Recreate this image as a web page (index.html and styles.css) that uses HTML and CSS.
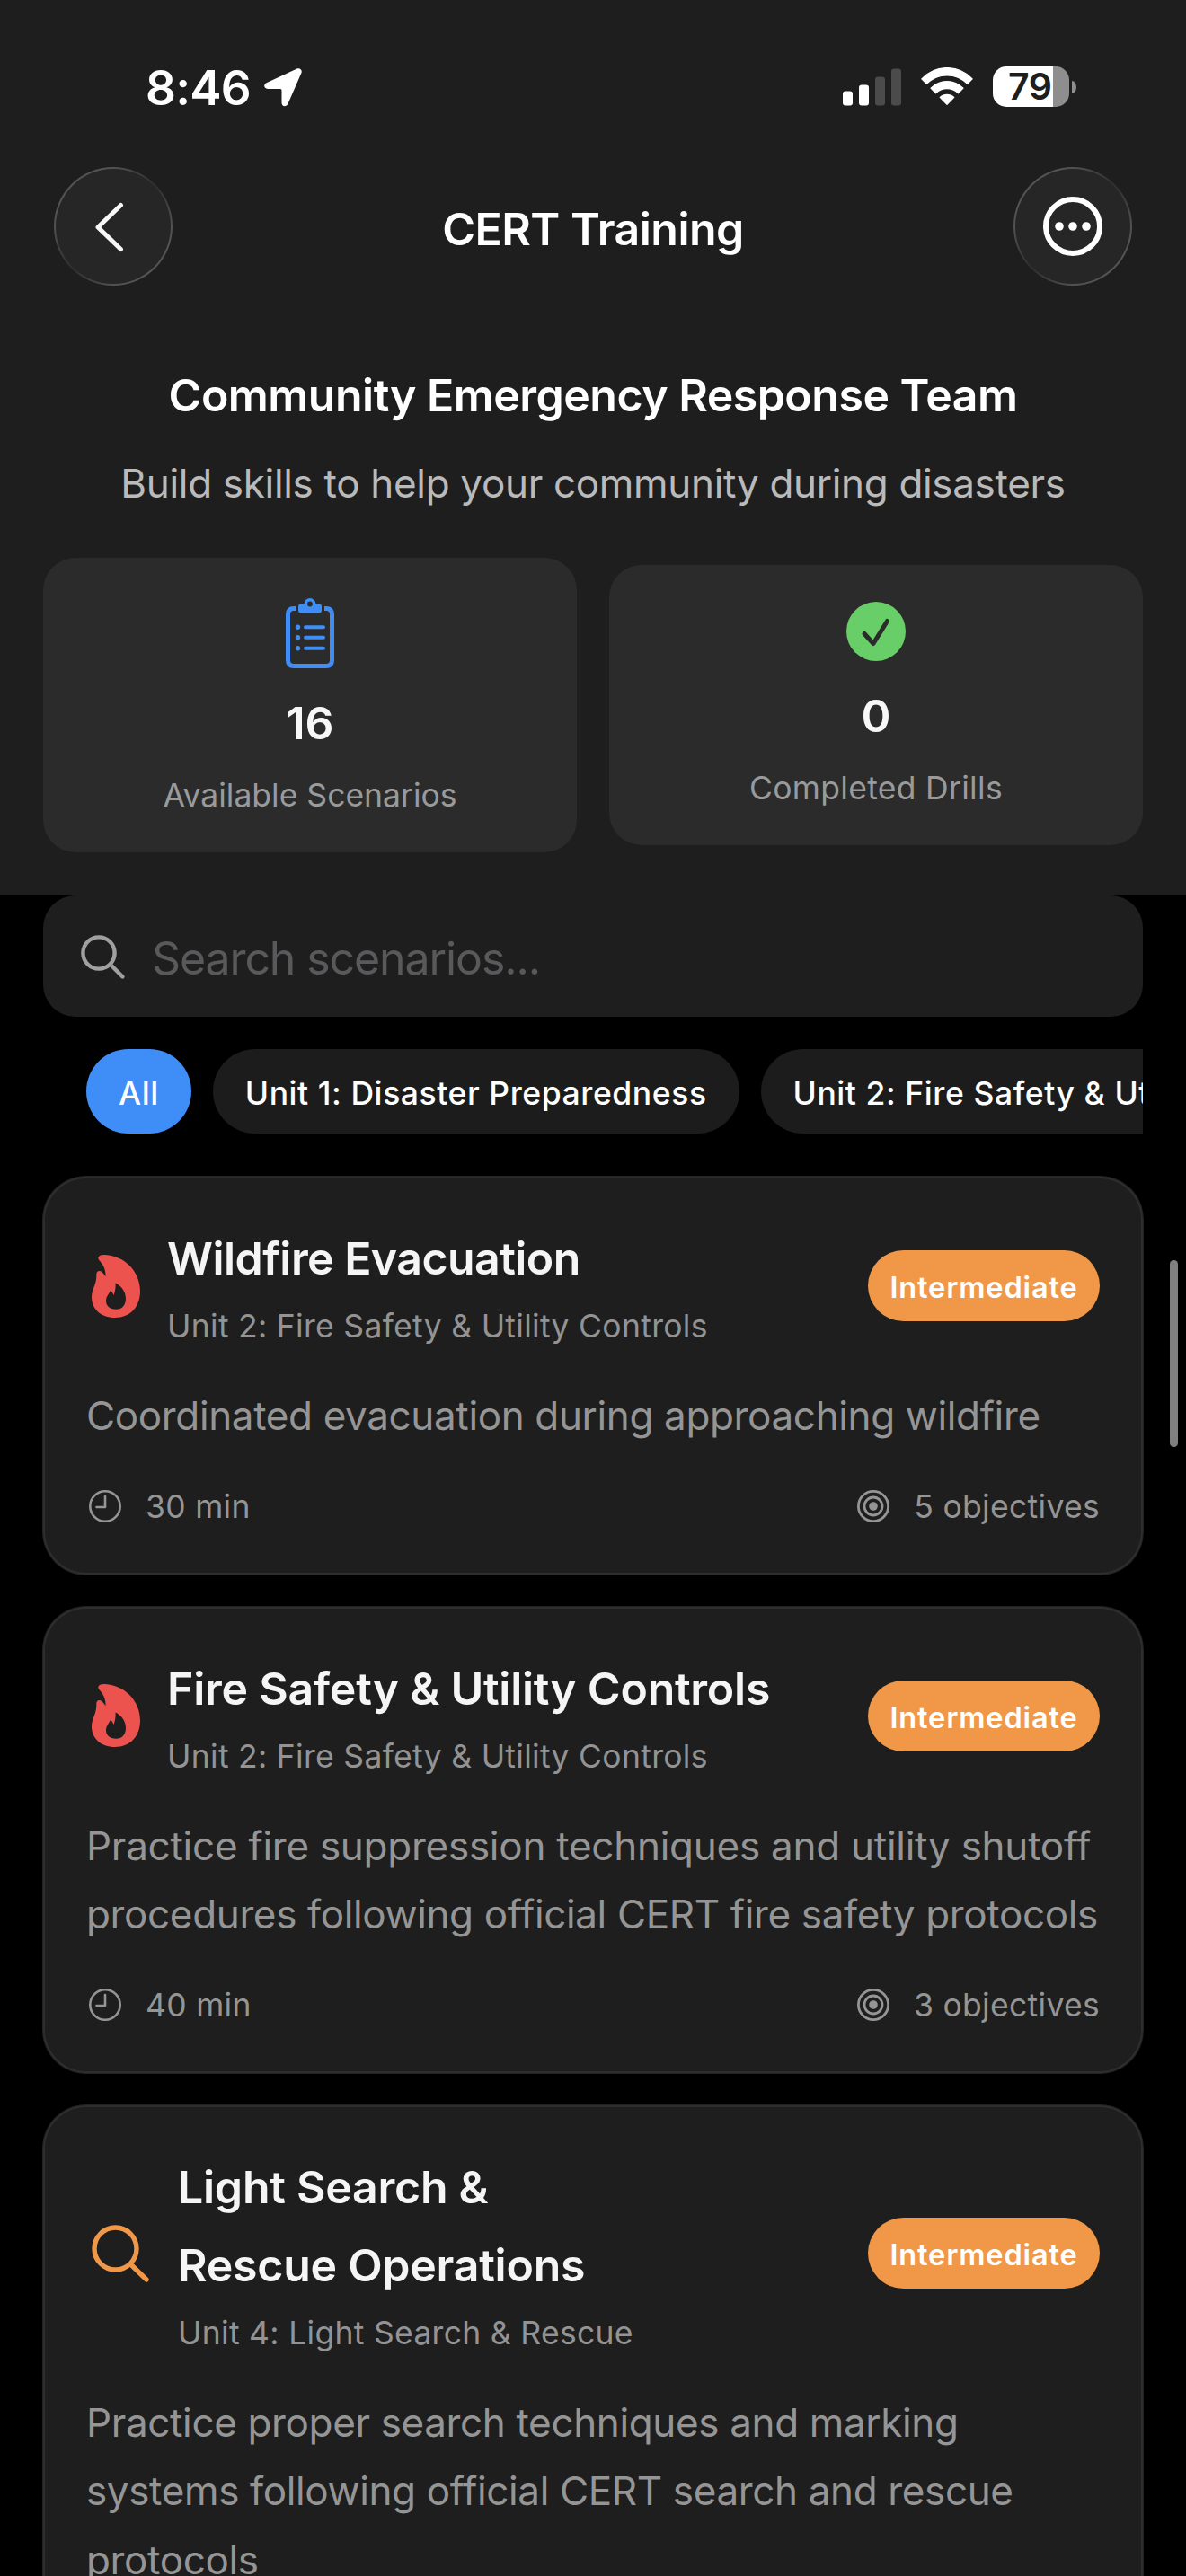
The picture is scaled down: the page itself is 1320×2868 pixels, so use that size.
FILE: index.html
```html
<!DOCTYPE html>
<html lang="en">
<head>
<meta charset="utf-8">
<title>CERT Training</title>
<link rel="stylesheet" href="styles.css">
</head>
<body>
<svg class="defs" width="0" height="0" aria-hidden="true">
  <defs>
    <symbol id="flame" viewBox="0 0 54 70"><path fill-rule="evenodd" d="M13.500 0C36 .5 54 18 54 40.500C54 58 43 70 26 70C10 70 0 60 0 47.500C0 38 5.800 33 5.300 22C5.300 17.500 9 17 11.500 19.300C13.300 21 14.500 22.500 15.500 24.500C16 17 13 11 8.300 6C6 3 8 0 13.500 0ZM26.500 31.500C27 36 26 41 24.700 45C23.600 43 22.500 41 21 39.500C20 43 16 46 16 51.500C16 57 20.500 60.800 27 60.800C34 60.800 38 56 38 49C38 41 33 34.500 26.500 31.500Z"/></symbol>
    <symbol id="clock" viewBox="0 0 42 42"><g fill="none" stroke="currentColor" stroke-width="2.600" stroke-linecap="round" stroke-linejoin="round"><circle cx="21" cy="21" r="16.700"/><path d="M21 10V22H11.500"/></g></symbol>
    <symbol id="target" viewBox="0 0 42 42"><g fill="none" stroke="currentColor" stroke-width="2.800"><circle cx="21" cy="21" r="16.600"/><circle cx="21" cy="21" r="10"/></g><circle cx="21" cy="21" r="4.800" fill="currentColor"/></symbol>
  </defs>
</svg>

<header class="header">
  <div class="status">
    <div class="status-left">
      <span class="time">8:46</span>
      <svg class="location" width="42" height="43" viewBox="0 0 42 43"><path fill="#fff" d="M36.500.5C39.500-.8 42.600 1.600 41.500 5L26.500 39.500C24.800 43.500 19.500 43 19.500 38.500V24.500Q19.500 23 18 23H4C-.3 23-1.200 18 2.500 16.200Z"/></svg>
    </div>
    <div class="status-right">
      <svg width="65" height="42" viewBox="0 0 65 42"><rect x="0" y="25.500" width="11" height="16" rx="3" fill="#fff"/><rect x="18" y="18.500" width="11" height="23" rx="3" fill="#fff"/><rect x="36" y="9.500" width="11" height="32" rx="3" fill="#4b4b4b"/><rect x="54" y=".5" width="11" height="41" rx="3" fill="#4b4b4b"/></svg>
      <svg class="wifi" width="58" height="43" viewBox="0 0 58 43"><g fill="#fff" stroke="#fff" stroke-width="1.200" stroke-linejoin="round"><path d="M.8 12.800C16.500-3.500 41.500-3.500 57.200 12.800L51.700 18.400C39 5.700 19 5.700 6.300 18.400Z"/><path d="M11 23.200C21 13 37 13 47 23.200L41.500 28.800C34.700 22 23.300 22 16.500 28.800Z"/><path d="M21.200 33.400C25.600 29.400 32.400 29.400 36.800 33.400L29 41.400Z"/></g></svg>
      <div class="battery"><div class="battery-body"><span class="battery-text">79</span></div><div class="battery-cap"></div></div>
    </div>
  </div>
  <nav class="nav">
    <div class="round"><svg width="132" height="132" viewBox="0 0 132 132"><path d="M74.500 42.500L49 67L74.500 91.500" fill="none" stroke="#f7f7f7" stroke-width="5" stroke-linecap="round" stroke-linejoin="round"/></svg></div>
    <div class="nav-title">CERT Training</div>
    <div class="round"><svg width="132" height="132" viewBox="0 0 132 132"><circle cx="66" cy="66" r="30" fill="none" stroke="#fff" stroke-width="6"/><g fill="#fff"><circle cx="51" cy="66" r="4.800"/><circle cx="66" cy="66" r="4.800"/><circle cx="81" cy="66" r="4.800"/></g></svg></div>
  </nav>
  <h1 class="heading">Community Emergency Response Team</h1>
  <p class="lead">Build skills to help your community during disasters</p>
  <div class="stats">
    <div class="stat">
      <svg width="54" height="82" viewBox="0 0 54 82"><path d="M11 15.500H9Q2.500 15.500 2.500 22V73Q2.500 79.500 9 79.500H45Q51.500 79.500 51.500 73V22Q51.500 15.500 45 15.500H43" fill="none" stroke="#3f8ef7" stroke-width="5"/><g fill="#3f8ef7"><rect x="14" y="10.500" width="26" height="10" rx="3"/><circle cx="27" cy="10.500" r="6.500"/><circle cx="27" cy="10.500" r="2.900" fill="#2b2b2b"/><circle cx="13.500" cy="36.300" r="2.700"/><circle cx="13.500" cy="47.700" r="2.700"/><circle cx="13.500" cy="59.700" r="2.700"/><rect x="20" y="34.300" width="24" height="4" rx="2"/><rect x="20" y="45.700" width="24" height="4" rx="2"/><rect x="20" y="57.700" width="24" height="4" rx="2"/></g></svg>
      <div class="stat-value">16</div>
      <div class="stat-label">Available Scenarios</div>
    </div>
    <div class="stat">
      <svg width="66" height="66" viewBox="0 0 66 66"><circle cx="33" cy="33" r="33" fill="#68ce67"/><path d="M20 35.500L30 46.500L45.500 21.500" fill="none" stroke="#2b2b2b" stroke-width="5" stroke-linecap="round" stroke-linejoin="round"/></svg>
      <div class="stat-value">0</div>
      <div class="stat-label wide">Completed Drills</div>
    </div>
  </div>
</header>

<main class="main">
  <div class="search">
    <svg width="50" height="50" viewBox="0 0 50 50"><g fill="none" stroke="#a0a0a0" stroke-width="4.400" stroke-linecap="round"><circle cx="20" cy="20" r="17.600"/><path d="M33 33L46.500 46.500"/></g></svg>
    <span class="search-text">Search scenarios...</span>
  </div>
  <div class="chips">
    <div class="chip active">All</div>
    <div class="chip">Unit 1: Disaster Preparedness</div>
    <div class="chip">Unit 2: Fire Safety &amp; Utility Controls</div>
  </div>

  <div class="cards">
    <article class="card">
      <div class="card-head">
        <svg class="flame" width="66" height="70"><use href="#flame"/></svg>
        <div class="names"><h2 class="title tight">Wildfire Evacuation</h2><div class="unit">Unit 2: Fire Safety &amp; Utility Controls</div></div>
        <span class="badge">Intermediate</span>
      </div>
      <p class="desc">Coordinated evacuation during approaching wildfire</p>
      <div class="meta">
        <div class="meta-item"><svg width="42" height="42"><use href="#clock"/></svg>30 min</div>
        <div class="meta-item"><svg width="42" height="42"><use href="#target"/></svg>5 objectives</div>
      </div>
    </article>

    <article class="card">
      <div class="card-head">
        <svg class="flame" width="66" height="70"><use href="#flame"/></svg>
        <div class="names"><h2 class="title">Fire Safety &amp; Utility Controls</h2><div class="unit">Unit 2: Fire Safety &amp; Utility Controls</div></div>
        <span class="badge">Intermediate</span>
      </div>
      <p class="desc"><span class="loose">Practice fire suppression techniques and utility shutoff</span><br>procedures following official CERT fire safety protocols</p>
      <div class="meta">
        <div class="meta-item"><svg width="42" height="42"><use href="#clock"/></svg>40 min</div>
        <div class="meta-item"><svg width="42" height="42"><use href="#target"/></svg>3 objectives</div>
      </div>
    </article>

    <article class="card">
      <div class="card-head">
        <svg width="78" height="66" viewBox="0 0 78 66"><g fill="none" stroke="#f09848" stroke-width="5.400" stroke-linecap="round"><circle cx="32.500" cy="27.500" r="23.500"/><path d="M49.500 45L67 62"/></g></svg>
        <div class="names"><h2 class="title">Light Search &amp;<br>Rescue Operations</h2><div class="unit">Unit 4: Light Search &amp; Rescue</div></div>
        <span class="badge">Intermediate</span>
      </div>
      <p class="desc">Practice proper search techniques and marking<br>systems following official CERT search and rescue<br>protocols</p>
    </article>
  </div>
</main>
<div class="scrollbar"></div>
</body>
</html>
```
FILE: styles.css
```css
* { box-sizing: border-box; margin: 0; padding: 0; }
html, body { height: 2868px; overflow: hidden; }
body {
  position: relative;
  width: 1320px;
  background: #000;
  color: #fff;
  font-family: Inter, "Liberation Sans", sans-serif;
}
svg { display: block; flex: none; }
.defs { position: absolute; }

.header { height: 997px; background: #1e1e1e; }
.status { height: 186px; padding: 74px 122px 0 162px; display: flex; justify-content: space-between; align-items: flex-start; }
.status-left { display: flex; align-items: center; gap: 15px; height: 47px; }
.time { font-size: 53px; font-weight: 600; line-height: 48px; letter-spacing: -0.8px; }
.status-right { display: flex; align-items: center; gap: 22px; height: 45px; }
.battery { display: flex; align-items: center; gap: 3px; }
.battery-body {
  width: 85px; height: 45px; border-radius: 15px;
  background: linear-gradient(90deg, #fff 67px, #8e8e8e 67px);
  padding-left: 17px;
}
.battery-text { display: block; font-size: 41px; line-height: 45px; font-weight: 600; color: #1e1e1e; letter-spacing: -0.5px; }
.battery-cap { width: 5px; height: 14px; border-radius: 0 5px 5px 0 / 0 7px 7px 0; background: #8e8e8e; }

.nav { height: 132px; padding: 0 60px; display: flex; justify-content: space-between; }
.round {
  width: 132px; height: 132px; border-radius: 50%; padding: 2px;
  background: linear-gradient(135deg, #585858 0%, #525252 25%, #303030 48%, #303030 52%, #525252 75%, #585858 100%);
  position: relative;
}
.round svg { margin: -2px; position: relative; }
.round::before { content: ""; position: absolute; inset: 2px; border-radius: 50%; background: #262626; }
.nav-title { font-size: 50px; font-weight: 600; line-height: 60px; padding-top: 39px; letter-spacing: -0.5px; }

.heading { margin-top: 92px; text-align: center; font-size: 50px; line-height: 60px; font-weight: 600; letter-spacing: -0.5px; }
.lead { margin-top: 38px; text-align: center; font-size: 44px; line-height: 60px; color: #bababa; letter-spacing: -0.32px; }
.stats { margin-top: 53px; padding: 0 48px; display: grid; grid-template-columns: 1fr 1fr; gap: 36px; align-items: center; }
.stat { border-radius: 36px; background: #2b2b2b; padding: 41px 0 39px; display: flex; flex-direction: column; align-items: center; }
.stat-value { margin-top: 31px; font-size: 50px; line-height: 60px; font-weight: 600; color: #f7f7f7; }
.stat-label { margin-top: 27px; font-size: 35.5px; line-height: 48px; color: #9a9a9a; }
.stat-label.wide { letter-spacing: 0.3px; }

.main { padding: 0 48px; }
.search { height: 135px; border-radius: 36px; background: #1e1e1e; padding: 2px 42px 0; display: flex; align-items: center; gap: 29px; }
.search-text { font-size: 50px; line-height: 60px; padding-top: 3px; color: #59595b; letter-spacing: -1.1px; }
.chips { margin-top: 36px; padding-left: 48px; display: flex; gap: 24px; overflow: hidden; }
.chip { flex: none; height: 94px; border-radius: 47px; padding: 3px 36px 0; background: #1c1c1c; font-size: 35.5px; line-height: 94px; font-weight: 500; letter-spacing: 0.57px; white-space: nowrap; }
.chip.active { background: #3f8ef7; }

.cards { margin-top: 48px; display: flex; flex-direction: column; gap: 36px; }
.card { padding: 48px 48px 47px; border-radius: 48px; background: #1e1e1e; box-shadow: 0 0 0 1px #222, inset 0 0 0 2px #2e2e2e; }
.card-head { display: flex; align-items: center; gap: 24px; }
.flame { fill: #ec534e; }
.names { flex: 1; }
.title { font-size: 50px; line-height: 87px; font-weight: 600; color: #f5f5f5; letter-spacing: -0.25px; }
.title.tight { letter-spacing: -0.55px; }
.unit { margin-top: 4px; font-size: 35.5px; line-height: 56px; color: #939393; letter-spacing: 0.3px; }
.badge { width: 258px; height: 79px; border-radius: 40px; padding-top: 2px; background: #f09848; text-align: center; font-size: 32.5px; line-height: 79px; font-weight: 600; letter-spacing: 0.85px; }
.desc { margin-top: 33px; font-size: 44px; line-height: 76.5px; color: #959595; white-space: nowrap; letter-spacing: -0.36px; }
.loose { letter-spacing: -0.26px; }
.meta { margin-top: 35px; display: flex; justify-content: space-between; }
.meta-item { display: flex; align-items: center; gap: 24px; font-size: 35.5px; line-height: 56px; color: #959595; letter-spacing: 0.3px; }
.meta-item svg { margin-bottom: 2px; }

.scrollbar { position: absolute; left: 1302px; top: 1403px; width: 9px; height: 208px; border-radius: 5px; background: #808080; }
```
